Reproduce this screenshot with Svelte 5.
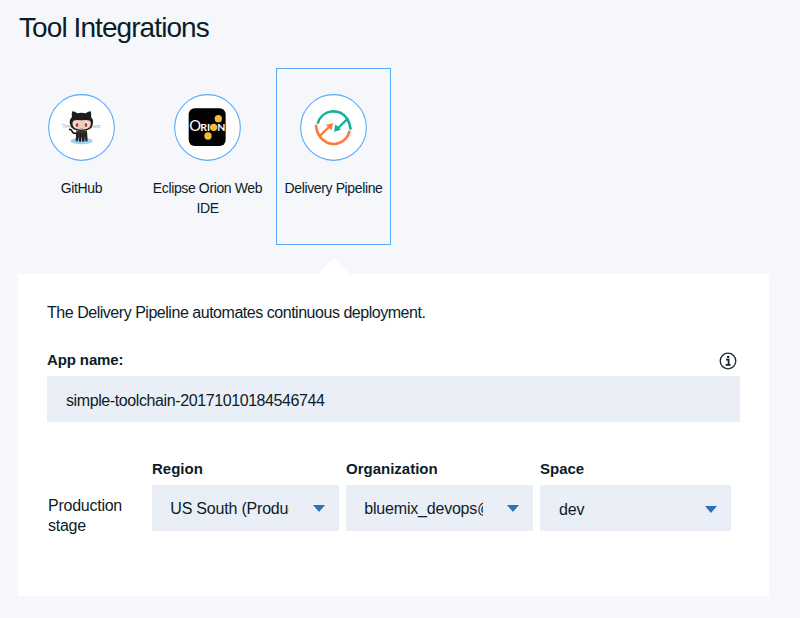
<script>
  const tools = [
    { id: 'github', label: 'GitHub' },
    { id: 'orion', label: 'Eclipse Orion Web IDE' },
    { id: 'pipeline', label: 'Delivery Pipeline' },
  ];
  const stages = [
    { label: 'Region', value: 'US South (Produc', kind: 'region' },
    { label: 'Organization', value: 'bluemix_devops@', kind: 'org' },
    { label: 'Space', value: 'dev', kind: 'space' },
  ];
  let selected = $state('pipeline');
</script>

<main>
  <h1>Tool Integrations</h1>

  <div class="tools">
    {#each tools as tool}
      <button class="tool {tool.id}" class:selected={selected === tool.id} onclick={() => (selected = tool.id)}>
        {#if tool.id === 'github'}
          <svg class="badge" viewBox="24 24 201 201">
            <circle class="ring" cx="124.5" cy="124.5" r="98.5" />
            <ellipse cx="125" cy="165" rx="34" ry="10" fill="#9dd3ee" />
            <path d="M89 130q6 1 8 7t12 5" fill="none" stroke="#17191c" stroke-width="5" stroke-linecap="round" />
            <path d="M109 134h32l2 30q-1 4-6 2l-2-14-2 15h-6l-2-15-2 15h-6l-2-15-2 14q-5 2-6-2z" fill="#35302f" />
            <path d="M112 140v23M121 142v24M129 142v24M138 140v23" stroke="#17191c" stroke-width="4" />
            <path d="M97 76q8 0 15 6 12-3 25 0 8-6 15-6 3 8 1 16 7 8 6 19-1 24-34 24t-36-24q0-12 7-19-2-8 1-16z" fill="#1c1d20" />
            <path d="M100 104q7-3 25-1 18-2 25 1 5 7 2 14-4 13-27 13t-27-13q-3-7 2-14z" fill="#f1cbb9" />
            <ellipse cx="110" cy="116" rx="6.5" ry="8.5" fill="#fff" />
            <ellipse cx="139" cy="116" rx="6.5" ry="8.5" fill="#fff" />
            <ellipse cx="111" cy="117" rx="4.5" ry="7" fill="#a94f48" />
            <ellipse cx="138" cy="117" rx="4.5" ry="7" fill="#a94f48" />
            <path d="M121 127q4 2 8 0" fill="none" stroke="#9b6b61" stroke-width="1.5" />
            <path d="M66 115l26 6M68 123l24-1M158 121l24-3M158 123l23 1" stroke="#c3c6c9" stroke-width="3" />
          </svg>
        {:else if tool.id === 'orion'}
          <svg class="badge" viewBox="24 24 201 201">
            <circle class="ring" cx="124.5" cy="124.5" r="98.5" />
            <rect x="68" y="67" width="111" height="113" rx="18" fill="#030303" />
            <circle cx="157" cy="98" r="11" fill="#f1bd3c" />
            <circle cx="143" cy="124" r="11" fill="#f1bd3c" />
            <circle cx="126" cy="150" r="11" fill="#f1bd3c" />
            <g class="orion-name">
              <text x="70" y="135" font-size="44" textLength="35" lengthAdjust="spacingAndGlyphs">O</text>
              <text x="103" y="134" font-size="29" font-weight="700" textLength="29" lengthAdjust="spacingAndGlyphs">RI</text>
              <text x="154" y="134" font-size="29" font-weight="700" textLength="24" lengthAdjust="spacingAndGlyphs">N</text>
            </g>
          </svg>
        {:else}
          <svg class="badge" viewBox="90 102 201 201">
            <circle class="ring" cx="190.5" cy="202.5" r="98.5" />
            <g fill="none" stroke="#14b09b" stroke-width="8">
              <path d="M143 191A49 49 0 0 1 232 177Q240 190 242 209" />
              <path d="M234 175L201 207" stroke-width="7" />
            </g>
            <path d="M192 215l4-22 17 16z" fill="#14b09b" />
            <g fill="none" stroke="#f97b3d" stroke-width="8">
              <path d="M138 194Q139 216 150 230A49 49 0 0 0 239 212" />
              <path d="M148 229L180 198" stroke-width="7" />
            </g>
            <path d="M189 189l-4 22-17-16z" fill="#f97b3d" />
          </svg>
        {/if}
        <span>{tool.label}</span>
      </button>
    {/each}
  </div>

  <section class="card">
    <svg class="pointer" viewBox="0 0 32 16"><path d="M0 16L16 0l16 16z" fill="#fff" /></svg>
    <p>The Delivery Pipeline automates continuous deployment.</p>

    <div class="name-row">
      <label for="app-name">App name:</label>
      <svg class="info" viewBox="0 0 18 18">
        <circle cx="9" cy="9" r="7.8" fill="none" stroke="#152935" stroke-width="1.3" />
        <path d="M7 7.6h2.6v5M6.6 12.9h5" fill="none" stroke="#152935" stroke-width="1.8" />
        <circle cx="9.2" cy="5" r="1.25" fill="#152935" />
      </svg>
    </div>
    <input id="app-name" type="text" value="simple-toolchain-20171010184546744" />

    <div class="stage">
      <div class="stage-name">Production stage</div>
      {#each stages as field}
        <div class="field {field.kind}">
          <div class="field-label">{field.label}</div>
          <div class="select">
            <span>{field.value}</span>
            <svg viewBox="0 0 12 7"><path d="M0 0h12L6 7z" fill="#2f6fbd" /></svg>
          </div>
        </div>
      {/each}
    </div>
  </section>
</main>

<style>
  :global(body) {
    background: #f5f7fb;
  }
  main {
    box-sizing: border-box;
    height: 618px;
    padding: 12px 31px 0 18px;
    overflow: hidden;
    background: #f5f7fb;
    color: #0c1c28;
    font-family: 'Liberation Sans', Arial, sans-serif;
  }
  h1 {
    margin: 0 0 24px 1px;
    font-size: 28px;
    line-height: 32px;
    font-weight: 400;
    letter-spacing: -0.92px;
  }
  .tools {
    display: flex;
    gap: 11px;
    padding-left: 6px;
  }
  .tool {
    box-sizing: border-box;
    display: flex;
    flex-direction: column;
    align-items: center;
    width: 115px;
    height: 177px;
    padding: 25px 0 0;
    border: 1px solid transparent;
    background: none;
    color: inherit;
    font: 14px/20.5px 'Liberation Sans', Arial, sans-serif;
    letter-spacing: -0.37px;
  }
  .tool.selected {
    border-color: #5aaafa;
  }
  .badge {
    width: 67px;
    height: 67px;
    margin-bottom: 16.7px;
  }
  .ring {
    fill: #fff;
    stroke: #5aaafa;
    stroke-width: 3.3;
  }
  .orion-name {
    fill: #fff;
    font-family: Lato, sans-serif;
  }
  .card {
    position: relative;
    box-sizing: border-box;
    height: 322px;
    margin-top: 29px;
    padding: 29px 29px 0;
    background: #fff;
  }
  .pointer {
    position: absolute;
    left: 299.5px;
    top: -16px;
    width: 32px;
    height: 16px;
  }
  p {
    margin: 0;
    font-size: 16px;
    line-height: 20px;
    letter-spacing: -0.47px;
  }
  .name-row {
    display: flex;
    justify-content: space-between;
    height: 25px;
    margin-top: 28px;
    padding-right: 3.5px;
  }
  label {
    font-size: 15px;
    line-height: 18px;
    font-weight: 700;
    letter-spacing: -0.12px;
  }
  .info {
    width: 18px;
    height: 18px;
    margin-top: 0.5px;
  }
  input {
    display: block;
    box-sizing: border-box;
    width: 100%;
    height: 46px;
    padding: 3px 19px 0;
    border: 0;
    border-radius: 0;
    background: #eaeef6;
    color: inherit;
    font: 16px 'Liberation Sans', Arial, sans-serif;
    letter-spacing: -0.4px;
  }
  .stage {
    display: flex;
    gap: 7px;
    margin-top: 38px;
  }
  .stage-name {
    width: 97px;
    padding: 36px 0 0 1px;
    box-sizing: border-box;
    font-size: 16px;
    line-height: 20px;
    letter-spacing: -0.25px;
  }
  .stage-name + .field {
    margin-left: 1px;
  }
  .field {
    width: 187px;
  }
  .field.space {
    width: 191px;
  }
  .field-label {
    height: 25px;
    font-size: 15px;
    line-height: 18px;
    font-weight: 700;
  }
  .select {
    display: flex;
    box-sizing: border-box;
    align-items: center;
    justify-content: space-between;
    height: 46px;
    padding: 0 14.5px 0 18.3px;
    background: #eaeef6;
    font-size: 16px;
    letter-spacing: -0.2px;
  }
  .select span {
    width: 118.5px;
    padding-top: 1px;
    overflow: hidden;
    white-space: nowrap;
  }
  .select svg {
    width: 12px;
    height: 7px;
  }
  .space .select {
    padding: 2px 14.5px 0 19px;
  }
</style>
